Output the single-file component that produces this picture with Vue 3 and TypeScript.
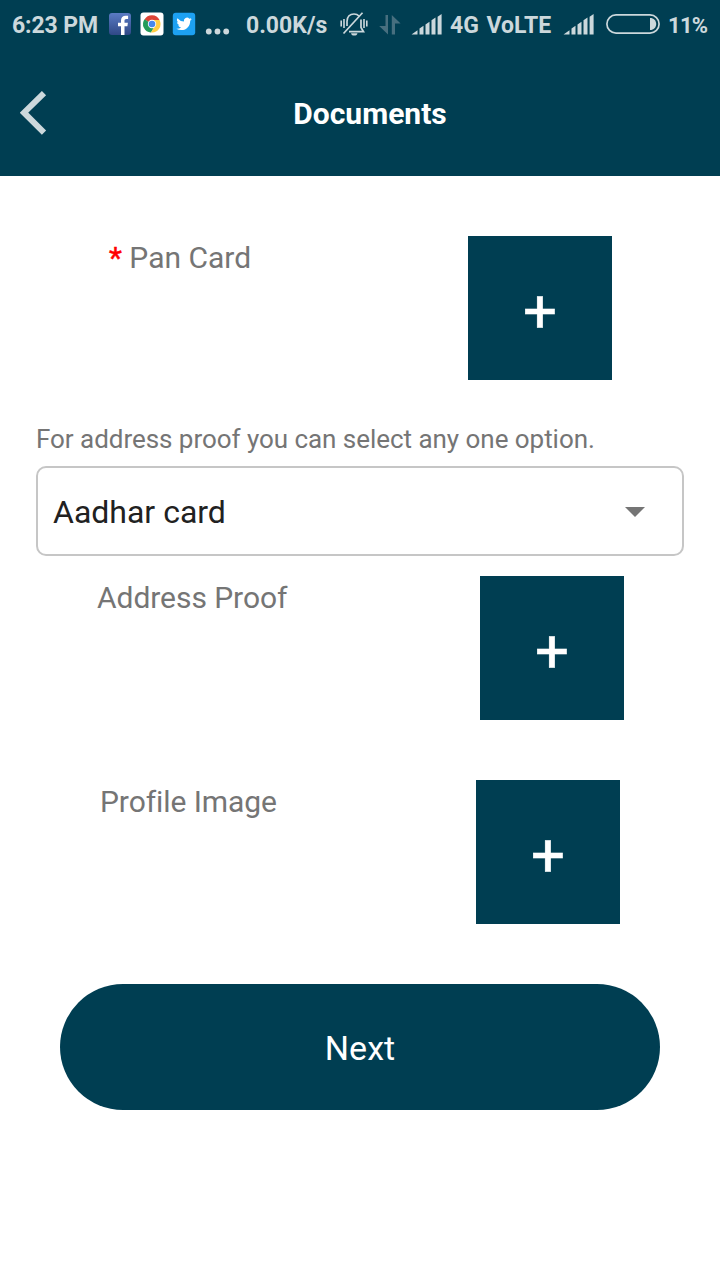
<script setup lang="ts">
interface DocumentRow {
  label: string
  required: boolean
  kind: string
}

const panCard: DocumentRow = { label: 'Pan Card', required: true, kind: 'pan' }
const otherDocuments: DocumentRow[] = [
  { label: 'Address Proof', required: false, kind: 'address' },
  { label: 'Profile Image', required: false, kind: 'profile' },
]
</script>

<template>
  <div class="screen">
    <div class="status">
      <span class="clock">6:23 PM</span>
      <svg class="app" width="24" height="24" viewBox="0 0 24 24">
        <defs>
          <linearGradient id="fb" x1="0" y1="0" x2="0" y2="1">
            <stop offset="0" stop-color="#5a7bc4" />
            <stop offset="1" stop-color="#2f4886" />
          </linearGradient>
        </defs>
        <rect x="1" y="1" width="22" height="22" rx="3" fill="url(#fb)" />
        <path d="M13 23V14.2h-3v-3.4h3V8.4c0-3 1.8-4.7 4.7-4.7h2.4V7h-1.8c-1.400 0-1.800.7-1.800 1.800v2h3.400l-.5 3.400h-2.900V23z" fill="#fff" />
      </svg>
      <svg class="app" width="24" height="24" viewBox="0 0 24 24">
        <rect x=".5" y=".5" width="23" height="23" rx="3" fill="#fff" />
        <path d="M12 12 4.5 7.5A8.5 8.5 0 0 1 19.5 8H12z" fill="#dc4437" />
        <path d="M12 12 4.5 7.2A8.5 8.5 0 0 0 11 20.5L15 14z" fill="#249b5a" />
        <path d="M12 8h7.5A8.5 8.5 0 0 1 11 20.5L15.3 13z" fill="#ffce44" />
        <circle cx="12" cy="12" r="4.2" fill="#fff" />
        <circle cx="12" cy="12" r="3.3" fill="#4688ed" />
      </svg>
      <svg class="app" width="24" height="24" viewBox="0 0 24 24">
        <rect x=".8" y=".8" width="22.4" height="22.4" rx="3" fill="#1da1f2" />
        <path transform="translate(4.4 4.2) scale(.64)" d="M23.95 4.57a10 10 0 0 1-2.82.78 4.96 4.96 0 0 0 2.16-2.72 10 10 0 0 1-3.13 1.18 4.92 4.92 0 0 0-8.38 4.48A13.93 13.93 0 0 1 1.64 3.16a4.92 4.92 0 0 0 1.52 6.57 4.9 4.9 0 0 1-2.23-.61v.06a4.92 4.92 0 0 0 3.95 4.83 5 5 0 0 1-2.21.08 4.94 4.94 0 0 0 4.6 3.42A9.87 9.87 0 0 1 0 19.54a14 14 0 0 0 7.55 2.21c9.05 0 14-7.5 14-13.98 0-.21 0-.42-.02-.63a9.94 9.94 0 0 0 2.42-2.57z" fill="#fff" />
      </svg>
      <svg class="dots" width="25" height="24" viewBox="0 0 25 24">
        <g fill="#ccd8dc"><circle cx="3.8" cy="19.5" r="2.9" /><circle cx="12.500" cy="19.5" r="2.9" /><circle cx="21.200" cy="19.5" r="2.9" /></g>
      </svg>
      <span class="speed">0.00K/s</span>
      <svg class="vibrate" width="28" height="24" viewBox="0 0 28 24" fill="none" stroke="#ccd8dc">
        <path d="M1.2 8.5v6M4 7v9M24 7v9M26.8 8.5v6" stroke-width="1.6" />
        <path d="M7 14V9.5C7 4.5 10 2 14 2c2 0 3.800.7 5 2M21 7.5v8l2.500 4.200H9" stroke-width="1.7" />
        <path d="M3.5 21.5 22.5.8" stroke-width="1.7" />
        <path d="M11 21.2h6.500c-.5 2-1.700 2.400-3.200 2.400s-2.800-.5-3.300-2.400z" fill="#ccd8dc" stroke="none" />
      </svg>
      <svg class="data" width="22" height="20" viewBox="0 0 22 20">
        <path d="M6.5 0H9v19.5L.2 11h6.300zM12.800 19.500V0L21.600 8.500H16v11z" fill="#476f7f" />
      </svg>
      <svg class="signal" width="32" height="22" viewBox="0 0 32 22">
        <path d="M.5 20.6 6.5 16.3v4.3zM8.5 14.6l4-2.8v8.8h-4zM14.5 10.5l4-2.8v12.9h-4zM20.5 6.3l4-2.8v17.1h-4zM26.6 2.8l4-2.7v20.5h-4z" fill="#ccd8dc" />
      </svg>
      <span class="network">4G VoLTE</span>
      <svg class="signal second" width="32" height="22" viewBox="0 0 32 22">
        <path d="M.5 20.6 6.5 16.3v4.3zM8.5 14.6l4-2.8v8.8h-4zM14.5 10.5l4-2.8v12.9h-4zM20.5 6.3l4-2.8v17.1h-4zM26.6 2.8l4-2.7v20.5h-4z" fill="#ccd8dc" />
      </svg>
      <svg class="battery" width="54" height="20" viewBox="0 0 54 20">
        <rect x=".9" y=".9" width="52.2" height="18.2" rx="9.1" fill="none" stroke="#ccd8dc" stroke-width="1.7" />
        <path d="M44 4c3.800 0 6.200 2.600 6.200 6S47.800 16 44 16z" fill="#ccd8dc" />
      </svg>
      <span class="level">11%</span>
    </div>

    <header class="bar">
      <svg class="back" width="28" height="44" viewBox="0 0 28 44">
        <path d="M24 2.200 4 21.700l20 19.900" fill="none" stroke="#ccd8dc" stroke-width="6" />
      </svg>
      <h1 class="title">Documents</h1>
    </header>

    <main class="content">
      <div class="row">
        <div class="label" :class="panCard.kind"><span v-if="panCard.required" class="star">*</span> {{ panCard.label }}</div>
        <button class="add" type="button">+</button>
      </div>

      <p class="hint">For address proof you can select any one option.</p>
      <div class="select">
        <span class="value">Aadhar card</span>
        <svg class="arrow" width="20" height="10" viewBox="0 0 20 10"><path d="M0 0h20L10 10z" fill="#757575" /></svg>
      </div>

      <div v-for="doc in otherDocuments" :key="doc.kind" class="row" :class="'row-' + doc.kind">
        <div class="label" :class="doc.kind">{{ doc.label }}</div>
        <button class="add" type="button">+</button>
      </div>

      <button class="next" type="button">Next</button>
    </main>
  </div>
</template>

<style>
body {
  margin: 0;
  background: #fff;
}
</style>

<style scoped>
.screen {
  width: 720px;
  height: 1280px;
  overflow: hidden;
  background: #fff;
  font-family: Roboto, "Liberation Sans", sans-serif;
}
.status {
  display: flex;
  align-items: flex-start;
  height: 50px;
  padding: 0 0 0 12px;
  box-sizing: border-box;
  background: #003e52;
  color: #ccd8dc;
  font-size: 23px;
  font-weight: 700;
  line-height: 52px;
  white-space: nowrap;
}
.status svg {
  flex: none;
}
.status span {
  flex: none;
}
.clock {
  width: 96px;
  letter-spacing: -0.1px;
}
.app {
  margin: 12px 8px 0 0;
}
.dots {
  margin: 12px 16px 0 1px;
}
.speed {
  width: 94px;
}
.vibrate {
  margin: 12px 11px 0 0;
}
.data {
  margin: 15px 10px 0 0;
}
.signal {
  margin: 14px 7px 0 0;
}
.network {
  width: 113px;
  word-spacing: 2px;
}
.signal.second {
  margin-right: 11px;
}
.battery {
  margin: 14px 8px 0 0;
}
.level {
  font-size: 22px;
  letter-spacing: -0.7px;
}
.bar {
  display: flex;
  align-items: center;
  height: 126px;
  padding: 0 20px;
  box-sizing: border-box;
  background: #003e52;
}
.back {
  flex: none;
}
.title {
  flex: 1;
  margin: 2px 28px 0 0;
  padding-left: 20px;
  color: #fff;
  font-size: 30px;
  font-weight: 700;
  line-height: 36px;
  text-align: center;
}
.content {
  padding-top: 60px;
}
.row {
  display: flex;
  justify-content: space-around;
  align-items: flex-start;
  height: 144px;
}
.row-address {
  margin-top: 20px;
}
.row-profile {
  margin-top: 60px;
}
.label {
  padding-top: 2px;
  box-sizing: border-box;
  color: #757575;
  font-size: 30px;
  line-height: 40px;
  white-space: nowrap;
}
.pan {
  width: 144px;
  padding-left: 1px;
}
.address {
  width: 192px;
  padding-left: 1px;
  letter-spacing: -0.05px;
}
.profile {
  width: 176px;
  letter-spacing: -0.08px;
}
.star {
  color: #f00;
  -webkit-text-stroke: 0.5px #f00;
}
.add {
  width: 144px;
  height: 144px;
  padding: 8px 0 0;
  border: 0;
  background: #003e52;
  color: #fff;
  font-family: inherit;
  font-size: 60px;
  font-weight: 400;
  line-height: 136px;
  -webkit-text-stroke: 0.5px #fff;
}
.hint {
  margin: 42px 36px 0;
  height: 44px;
  color: #757575;
  font-size: 26px;
  line-height: 34px;
  letter-spacing: -0.04px;
  white-space: nowrap;
}
.select {
  display: flex;
  align-items: center;
  justify-content: space-between;
  height: 90px;
  margin: 0 36px;
  padding: 2px 37px 0 15px;
  box-sizing: border-box;
  border: 2px solid #c6c6c6;
  border-radius: 10px;
  color: #212121;
  font-size: 32px;
}
.next {
  display: block;
  width: 600px;
  height: 126px;
  margin: 60px auto 0;
  padding: 2px 0 0;
  border: 0;
  border-radius: 63px;
  background: #003e52;
  color: #fff;
  font-family: inherit;
  font-size: 34px;
}
</style>
